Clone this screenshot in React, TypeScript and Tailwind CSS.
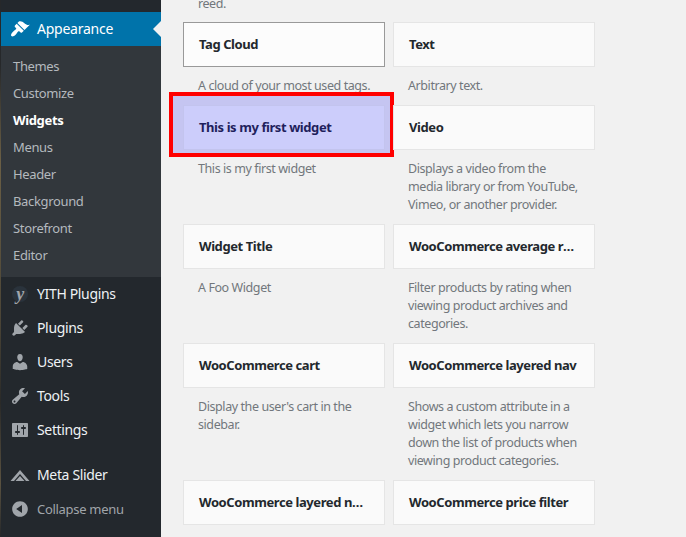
const FONT = "font-['Noto_Sans',sans-serif]";

// Dashicons paths, 20x20 grid
const icons: Record<string, string> = {
  appearance:
    "M14.48 11.06L7.41 3.99l1.5-1.5c.5-.56 2.3-.47 3.51.32 1.21.8 1.43 1.28 2.91 2.1 1.18.64 2.45 1.26 4.45.85zm-.71.71L6.7 4.7 4.93 6.47c-.39.39-.39 1.02 0 1.41l1.06 1.06c.39.39.39 1.03 0 1.42-.6.6-1.43 1.11-2.21 1.69-.35.26-.7.53-1.01.84C1.43 14.23.4 16.08 1.4 17.07c.99 1 2.84-.03 4.18-1.36.31-.31.58-.66.85-1.02.57-.78 1.08-1.61 1.69-2.21.39-.39 1.02-.39 1.41 0l1.06 1.06c.39.39 1.02.39 1.41 0z",
  plugins:
    "M13.11 4.36L9.87 7.6 8 5.73l3.24-3.24c.35-.34 1.05-.2 1.56.32.52.51.66 1.21.31 1.55zm-8 1.77l.91-1.12 9.01 9.01-1.19.84c-.71.71-2.63 1.16-3.82 1.16H6.14L4.9 17.26c-.59.59-1.54.59-2.12 0-.59-.58-.59-1.53 0-2.12l1.24-1.24v-3.88c0-1.13.4-3.19 1.09-3.89zm7.26 3.97l3.24-3.24c.34-.35 1.04-.21 1.55.31.52.51.66 1.21.31 1.55l-3.24 3.25z",
  users:
    "M10 9.25c-2.27 0-2.73-3.44-2.73-3.44C7 4.02 7.82 2 9.97 2c2.16 0 2.98 2.02 2.71 3.81 0 0-.41 3.44-2.68 3.44zm0 2.57L12.72 10c2.39 0 4.52 2.33 4.52 4.53v2.49s-3.65 1.13-7.24 1.13c-3.65 0-7.24-1.13-7.24-1.13v-2.49c0-2.25 1.94-4.48 4.47-4.48z",
  tools:
    "M16.68 9.77c-1.34 1.34-3.3 1.67-4.95.99l-5.41 6.52c-.99.99-2.59.99-3.58 0s-.99-2.59 0-3.57l6.52-5.42c-.68-1.65-.35-3.61.99-4.95 1.28-1.28 3.12-1.62 4.72-1.06l-2.89 2.89 2.82 2.82 2.86-2.87c.53 1.58.18 3.39-1.08 4.65zM3.81 16.21c.4.39 1.04.39 1.43 0 .4-.4.4-1.04 0-1.43-.39-.4-1.03-.4-1.43 0-.39.39-.39 1.03 0 1.43z",
  settings:
    "M18 16V4c0-.55-.45-1-1-1H3c-.55 0-1 .45-1 1v12c0 .55.45 1 1 1h14c.55 0 1-.45 1-1zM8 11h1c.55 0 1 .45 1 1s-.45 1-1 1H8v1.5c0 .28-.22.5-.5.5s-.5-.22-.5-.5V13H6c-.55 0-1-.45-1-1s.45-1 1-1h1V5.5c0-.28.22-.5.5-.5s.5.22.5.5V11zm5-2h-1c-.55 0-1-.45-1-1s.45-1 1-1h1V5.5c0-.28.22-.5.5-.5s.5.22.5.5V7h1c.55 0 1 .45 1 1s-.45 1-1 1h-1v5.5c0 .28-.22.5-.5.5s-.5-.22-.5-.5V9z",
  slider: "M10 5L19.5 16H16L10 9L4 16H.5ZM10 11L14.5 16H5.5Z",
  collapse:
    "M10 2.16c4.33 0 7.84 3.51 7.84 7.84s-3.51 7.84-7.84 7.84S2.16 14.33 2.16 10 5.71 2.16 10 2.16zm2 11.72V6.12L6.18 9.97z",
};

function Icon({ name, className = "" }: { name: string; className?: string }) {
  return (
    <svg viewBox="0 0 20 20" className={`h-5 w-5 shrink-0 fill-current ${className}`} aria-hidden="true">
      <path d={icons[name]} />
    </svg>
  );
}

const submenu = ["Themes", "Customize", "Widgets", "Menus", "Header", "Background", "Storefront", "Editor"];
const menu = [
  { label: "Plugins", icon: "plugins" },
  { label: "Users", icon: "users" },
  { label: "Tools", icon: "tools" },
  { label: "Settings", icon: "settings" },
];

function MenuRow({ label, children, className = "" }: { label: string; children: React.ReactNode; className?: string }) {
  return (
    <div className={`flex h-[34px] items-center pl-[9px] text-[14px] tracking-[-0.35px] text-[#eef2f5] ${className}`}>
      <span className="flex w-[27px] shrink-0 items-center text-[#a0a5aa]">{children}</span>
      <span className="pb-[2px]">{label}</span>
    </div>
  );
}

function Sidebar() {
  return (
    <aside className="flex w-[160px] shrink-0 flex-col bg-[#23282d] pt-3">
      <div className="relative flex h-[34px] items-center bg-[#0073aa] pl-[9px] text-[14px] tracking-[-0.25px] text-white">
        <span className="flex w-[27px] shrink-0 items-center">
          <Icon name="appearance" />
        </span>
        <span className="pb-[2px]">Appearance</span>
        <span className="absolute right-0 top-[9px] border-y-[8px] border-r-[8px] border-y-transparent border-r-[#f1f1f1]" />
      </div>
      <ul className="bg-[#32373c] pb-[8px] pt-[7px] text-[13px] tracking-[-0.35px] text-[#b4b9be]">
        {submenu.map((item) => (
          <li key={item} className={`h-[27px] pl-3 leading-[27px] ${item === "Widgets" ? "font-bold text-white" : ""}`}>
            {item}
          </li>
        ))}
      </ul>
      <MenuRow label="YITH Plugins">
        <span className="ml-[2px] flex h-4 w-4 items-center justify-center rounded-full bg-[#2a333c] font-['Liberation_Serif',serif] text-[18px] font-bold italic leading-none text-[#a0a5aa]">
          y
        </span>
      </MenuRow>
      {menu.map((m) => (
        <MenuRow key={m.label} label={m.label}>
          <Icon name={m.icon} />
        </MenuRow>
      ))}
      <MenuRow label="Meta Slider" className="mt-[11px]">
        <Icon name="slider" />
      </MenuRow>
      <div className="flex h-[34px] items-center pl-[9px] text-[13px] tracking-[-0.3px] text-[#a0a5aa]">
        <span className="flex w-[27px] shrink-0 items-center">
          <Icon name="collapse" />
        </span>
        <span className="pt-px">Collapse menu</span>
      </div>
    </aside>
  );
}

const widgets = [
  { title: "Tag Cloud", desc: "A cloud of your most used tags.", focused: true },
  { title: "Text", desc: "Arbitrary text." },
  { title: "This is my first widget", desc: "This is my first widget", marked: true },
  { title: "Video", desc: "Displays a video from the media library or from YouTube, Vimeo, or another provider." },
  { title: "Widget Title", desc: "A Foo Widget" },
  { title: "WooCommerce average rating", desc: "Filter products by rating when viewing product archives and categories." },
  { title: "WooCommerce cart", desc: "Display the user's cart in the sidebar." },
  { title: "WooCommerce layered nav", desc: "Shows a custom attribute in a widget which lets you narrow down the list of products when viewing product categories." },
  { title: "WooCommerce layered nav filters", desc: "" },
  { title: "WooCommerce price filter", desc: "" },
];

function WidgetCard({ title, desc, focused, marked }: { title: string; desc: string; focused?: boolean; marked?: boolean }) {
  const tone = marked
    ? "border-[#c3c4ee] bg-[#cccdfb] text-[#1f1f5c]"
    : focused
      ? "border-[#999] bg-[#fcfcfc] text-[#23282d]"
      : "border-[#e5e5e5] bg-[#fafafa] text-[#23282d]";
  return (
    <div>
      <div className="relative">
        {marked && <div className="absolute -bottom-[7px] -left-[14px] -right-[9px] -top-[13px] z-10 border-4 border-[#ff0000] bg-[#c5c5f1]" />}
        <div className={`relative z-20 h-[45px] truncate border px-[15px] text-[13px] font-bold leading-[43px] tracking-[-0.42px] ${tone}`}>
          {title}
        </div>
      </div>
      <p className="mb-[10px] mt-[10px] pl-[15px] pr-[13px] text-[12.5px] leading-[18px] tracking-[-0.42px] text-[#72777c]">{desc}</p>
    </div>
  );
}

export default function App() {
  return (
    <div className={`flex h-[537px] w-[686px] overflow-hidden bg-[#f1f1f1] ${FONT}`}>
      <div className="w-px shrink-0 bg-[linear-gradient(#26282a_0%,#26282a_12%,#6b5f45_30%,#4a4436_60%,#2a2a28_75%,#5a5240_90%,#26282a_100%)]" />
      <Sidebar />
      <main className="min-w-0 flex-1 pl-[22px]">
        <p className="-mt-[5px] mb-[9px] px-[15px] text-[12.5px] leading-[18px] tracking-[-0.42px] text-[#72777c]">reed.</p>
        <div className="grid grid-cols-[202px_202px] gap-x-2">
          {widgets.map((w) => (
            <WidgetCard key={w.title} {...w} />
          ))}
        </div>
      </main>
    </div>
  );
}
